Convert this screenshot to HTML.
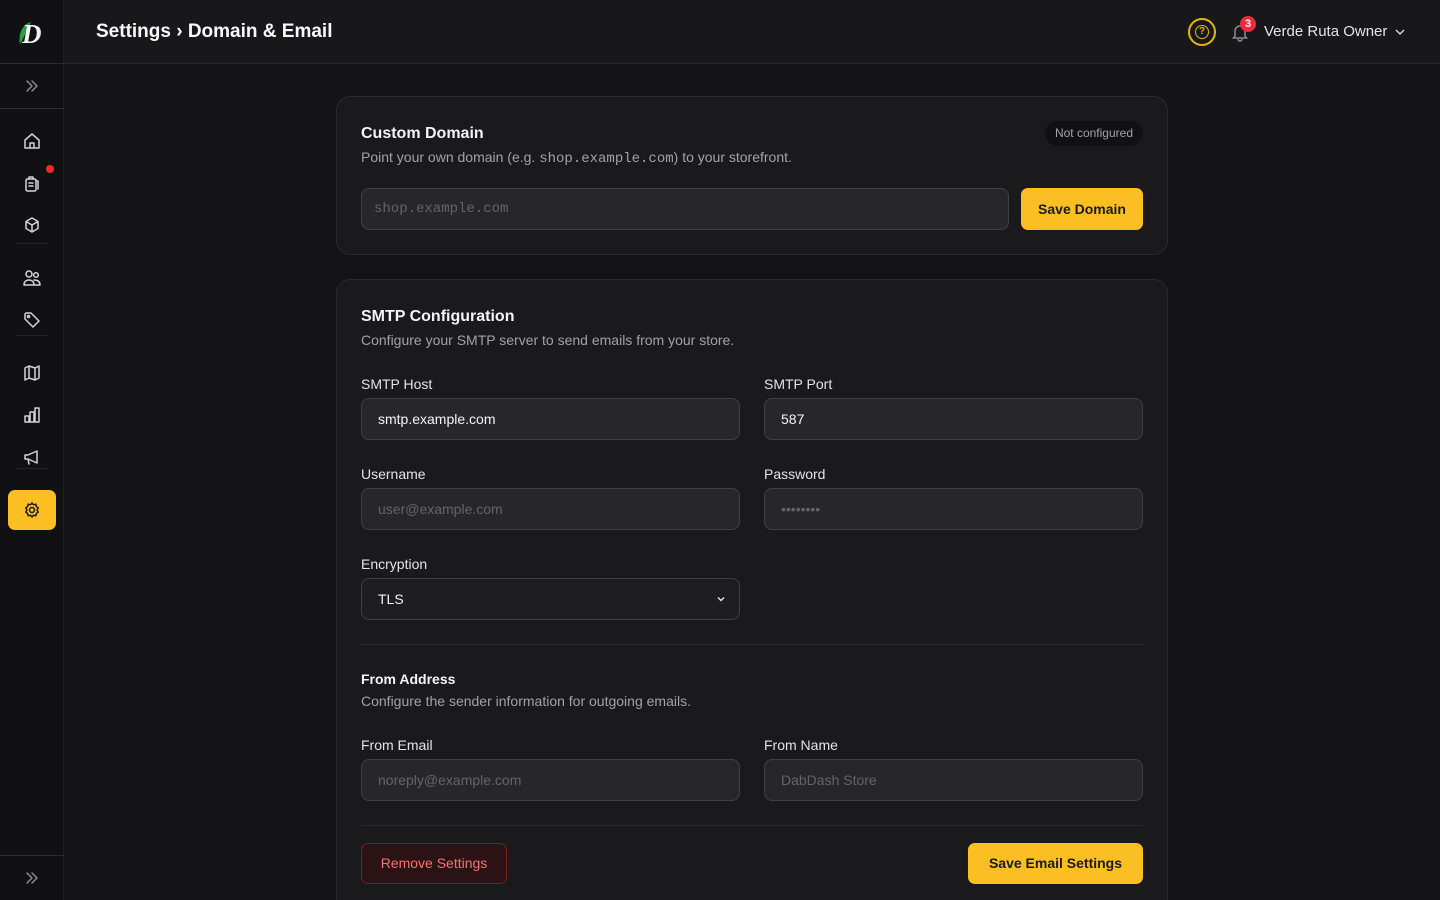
<!DOCTYPE html>
<html><head><meta charset="utf-8"><style>
*{box-sizing:border-box;margin:0;padding:0}
html{width:1440px;height:900px;overflow:hidden}
body{width:1440px;height:900px;overflow:hidden;background:#131315;font-family:"Liberation Sans",sans-serif;color:#e4e4e7;position:relative}
.side{position:absolute;left:0;top:0;width:64px;height:900px;background:#111113;border-right:1px solid #1f1f23}
.hdr{position:absolute;left:64px;top:0;right:0;height:64px;background:#18181b;border-bottom:1px solid #27272a}
.ic{position:absolute;left:22px;width:20px;height:20px}
.ic svg{width:20px;height:20px;fill:none;stroke:#d4d4d8;stroke-width:1.5;stroke-linecap:round;stroke-linejoin:round}
.sep{position:absolute;left:16px;width:32px;height:1px;background:#232327}
.card{position:absolute;left:336px;width:832px;background:#1a1a1d;border:1px solid #2a2a2e;border-radius:14px}
.t{position:absolute;font-size:16px;font-weight:bold;color:#f4f4f5}
.s{position:absolute;font-size:14px;color:#a1a1aa}
.l{position:absolute;font-size:14px;color:#e4e4e7}
.in{position:absolute;height:42px;background:#27272a;border:1px solid #3f3f46;border-radius:8px;font-size:14px;padding:0 16px;line-height:40px;color:#f4f4f5}
.ph{color:#63636b}
.btn{position:absolute;background:#fbbf24;color:#1c1917;font-weight:bold;font-size:14px;border-radius:7px;text-align:center}
.mono{font-family:"Liberation Mono",monospace}
.hr{position:absolute;left:24px;right:24px;height:1px;background:#2a2a2e}
</style></head><body>
<div class="side">
 <div style="position:absolute;left:0;top:0;width:64px;height:64px;border-bottom:1px solid #26303a"></div>
 <svg style="position:absolute;left:17px;top:18px" width="30" height="30" viewBox="0 0 30 30"><path d="M3 26 C1 15 6 6 14 4 C10 11 8 18 3 26Z" fill="#2f9e44"/><text x="5" y="25" font-family="Liberation Serif" font-style="italic" font-weight="bold" font-size="27" fill="#f4f4f5">D</text></svg>
 <div style="position:absolute;left:0;top:108px;width:64px;height:1px;background:#26303a"></div>
 <div class="ic" style="top:76px"><svg viewBox="0 0 20 20" style="stroke:#8a8a93"><path d="M5 5l5 5-5 5M10 5l5 5-5 5"/></svg></div>
 <div class="ic" style="top:131px"><svg viewBox="0 0 20 20"><path d="M3 9l7-6 7 6v8H3z M8 17v-5h4v5"/></svg></div>
 <div class="ic" style="top:173px"><svg viewBox="0 0 20 20"><rect x="4" y="6" width="10" height="12" rx="1.5"/><path d="M7 6V4h4v2M7 10h4M7 13h4M14 8h2v8"/></svg></div>
 <div style="position:absolute;left:46px;top:165px;width:8px;height:8px;border-radius:50%;background:#ef2b2b"></div>
 <div class="ic" style="top:215px"><svg viewBox="0 0 20 20"><path d="M10 3l6 3.5v7L10 17l-6-3.5v-7z M4 6.5L10 10l6-3.5M10 10v7"/></svg></div>
 <div class="sep" style="top:243px"></div>
 <div class="ic" style="top:268px"><svg viewBox="0 0 20 20"><circle cx="7" cy="6" r="3"/><circle cx="14" cy="7" r="2.3"/><path d="M2 17c0-4 3-5 5-5s5 1 5 5z M12 12c3 0 6 1 6 5h-6"/></svg></div>
 <div class="ic" style="top:310px"><svg viewBox="0 0 20 20"><path d="M3 4v5l8 8 6-6-8-8H4z"/><circle cx="6.5" cy="6.5" r="1"/></svg></div>
 <div class="sep" style="top:335px"></div>
 <div class="ic" style="top:363px"><svg viewBox="0 0 20 20"><path d="M3 5l4-2 6 2 4-2v12l-4 2-6-2-4 2z M7 3v12M13 5v12"/></svg></div>
 <div class="ic" style="top:405px"><svg viewBox="0 0 20 20"><path d="M3 17V11h4v6z M8 17V7h4v10z M13 17V3h4v14z"/></svg></div>
 <div class="ic" style="top:447px"><svg viewBox="0 0 20 20"><path d="M3 8h3l9-4v12l-9-4H3z M6 12l1 5"/></svg></div>
 <div class="sep" style="top:468px"></div>
 <div style="position:absolute;left:8px;top:490px;width:48px;height:40px;background:#fbbf24;border-radius:7px"></div>
 <div class="ic" style="top:500px"><svg viewBox="0 0 20 20" style="stroke:#1c1917"><circle cx="10" cy="10" r="2.5"/><path d="M10 3l1.5 1.8 2.3-.6.6 2.3L16.2 8 15 10l1.2 2-1.8 1.5-.6 2.3-2.3-.6L10 17l-1.5-1.8-2.3.6-.6-2.3L3.8 12 5 10 3.8 8l1.8-1.5.6-2.3 2.3.6z"/></svg></div>
 <div style="position:absolute;left:0;top:855px;width:64px;height:1px;background:#26303a"></div>
 <div class="ic" style="top:868px"><svg viewBox="0 0 20 20" style="stroke:#8a8a93"><path d="M5 5l5 5-5 5M10 5l5 5-5 5"/></svg></div>
</div>
<div class="hdr">
 <div style="position:absolute;left:32px;top:21px;font-size:19px;font-weight:bold;color:#fafafa">Settings › Domain &amp; Email</div>
 <div style="position:absolute;left:1124px;top:18px;width:28px;height:28px;border:2px solid #eab308;border-radius:50%"></div>
 <div style="position:absolute;left:1131px;top:25px;width:14px;height:14px;border:1.5px solid #eab308;border-radius:50%;font-size:10px;font-weight:bold;color:#eab308;text-align:center;line-height:11px">?</div>
 <svg style="position:absolute;left:1166px;top:22px" width="20" height="20" viewBox="0 0 20 20" fill="none" stroke="#8a8a93" stroke-width="1.5"><path d="M5 14V9a5 5 0 0110 0v5l1.5 2h-13z M8 17a2 2 0 004 0"/></svg>
 <div style="position:absolute;left:1176px;top:16px;width:16px;height:16px;border-radius:50%;background:#ef2b3b;color:#fff;font-size:11px;font-weight:bold;text-align:center;line-height:16px">3</div>
 <div style="position:absolute;left:1200px;top:23px;font-size:15px;color:#e4e4e7">Verde Ruta Owner</div>
 <svg style="position:absolute;left:1329px;top:25px" width="14" height="14" viewBox="0 0 14 14" fill="none" stroke="#d4d4d8" stroke-width="1.5"><path d="M3 5l4 4 4-4"/></svg>
</div>

<div class="card" style="top:96px;height:159px">
 <div class="t" style="left:24px;top:28px">Custom Domain</div>
 <div style="position:absolute;right:24px;top:24px;height:25px;padding:0 10px;background:#111113;border-radius:13px;font-size:12px;color:#a1a1aa;line-height:25px">Not configured</div>
 <div class="s" style="left:24px;top:52px">Point your own domain (e.g. <span class="mono">shop.example.com</span>) to your storefront.</div>
 <div class="in mono" style="left:24px;top:91px;width:648px;padding-left:12px"><span class="ph">shop.example.com</span></div>
 <div class="btn" style="left:684px;top:91px;width:122px;height:42px;line-height:42px">Save Domain</div>
</div>

<div class="card" style="top:279px;height:640px">
 <div class="t" style="left:24px;top:28px">SMTP Configuration</div>
 <div class="s" style="left:24px;top:52px">Configure your SMTP server to send emails from your store.</div>
 <div class="l" style="left:24px;top:96px">SMTP Host</div>
 <div class="l" style="left:427px;top:96px">SMTP Port</div>
 <div class="in" style="left:24px;top:118px;width:379px">smtp.example.com</div>
 <div class="in" style="left:427px;top:118px;width:379px">587</div>
 <div class="l" style="left:24px;top:186px">Username</div>
 <div class="l" style="left:427px;top:186px">Password</div>
 <div class="in" style="left:24px;top:208px;width:379px"><span class="ph">user@example.com</span></div>
 <div class="in" style="left:427px;top:208px;width:379px"><span class="ph">••••••••</span></div>
 <div class="l" style="left:24px;top:276px">Encryption</div>
 <div class="in" style="left:24px;top:298px;width:379px;background:#1e1e21">TLS</div>
 <svg style="position:absolute;left:378px;top:313px" width="12" height="12" viewBox="0 0 12 12" fill="none" stroke="#e4e4e7" stroke-width="1.5"><path d="M3 4.5l3 3 3-3"/></svg>
 <div class="hr" style="top:364px"></div>
 <div class="t" style="left:24px;top:391px;font-size:14px">From Address</div>
 <div class="s" style="left:24px;top:413px">Configure the sender information for outgoing emails.</div>
 <div class="l" style="left:24px;top:457px">From Email</div>
 <div class="l" style="left:427px;top:457px">From Name</div>
 <div class="in" style="left:24px;top:479px;width:379px"><span class="ph">noreply@example.com</span></div>
 <div class="in" style="left:427px;top:479px;width:379px"><span class="ph">DabDash Store</span></div>
 <div class="hr" style="top:545px"></div>
 <div style="position:absolute;left:24px;top:563px;width:146px;height:41px;background:#2a1215;border:1px solid #7f1d1d;border-radius:7px;color:#f87171;font-size:14px;text-align:center;line-height:39px">Remove Settings</div>
 <div class="btn" style="left:631px;top:563px;width:175px;height:41px;line-height:41px">Save Email Settings</div>
</div>
</body></html>
